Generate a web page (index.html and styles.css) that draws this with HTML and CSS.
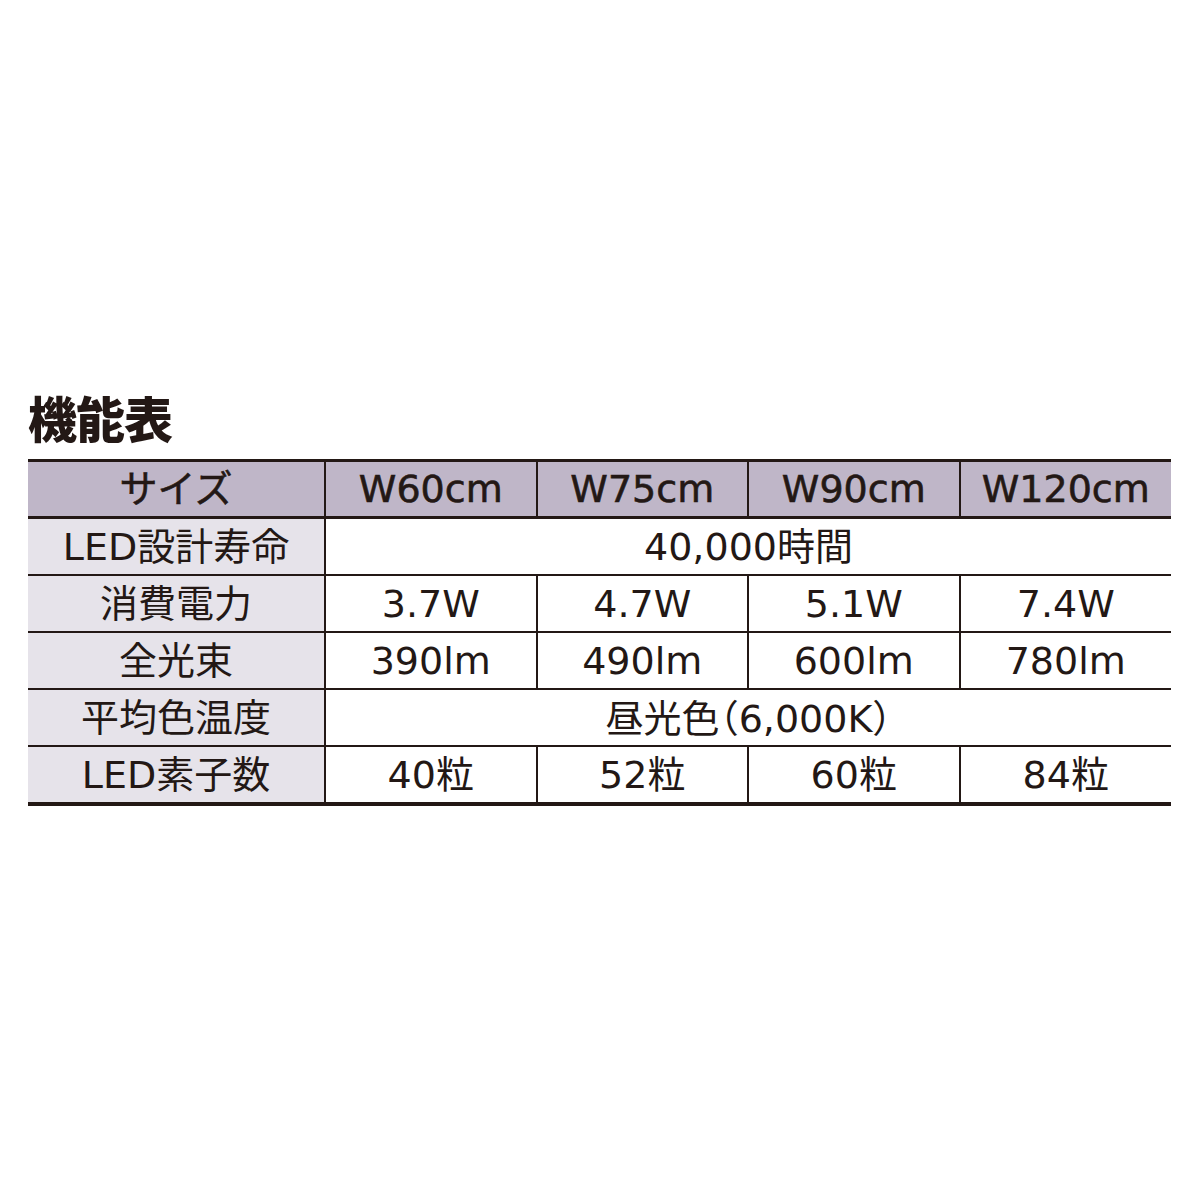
FILE: index.html
```html
<!DOCTYPE html>
<html lang="ja">
<head>
<meta charset="utf-8">
<link rel="stylesheet" href="styles.css">
</head>
<body>
<div class="page">
  <h1 class="title">機能表</h1>
  <table class="spec">
    <colgroup>
      <col class="c-label">
      <col class="c-val">
      <col class="c-val">
      <col class="c-val">
      <col class="c-val">
    </colgroup>
    <thead>
      <tr>
        <th>サイズ</th>
        <th>W60cm</th>
        <th>W75cm</th>
        <th>W90cm</th>
        <th>W120cm</th>
      </tr>
    </thead>
    <tbody>
      <tr>
        <th>LED設計寿命</th>
        <td colspan="4">40,000時間</td>
      </tr>
      <tr>
        <th>消費電力</th>
        <td>3.7W</td>
        <td>4.7W</td>
        <td>5.1W</td>
        <td>7.4W</td>
      </tr>
      <tr>
        <th>全光束</th>
        <td>390lm</td>
        <td>490lm</td>
        <td>600lm</td>
        <td>780lm</td>
      </tr>
      <tr>
        <th>平均色温度</th>
        <td colspan="4">昼光色<span class="paren">（</span>6,000K<span class="paren">）</span></td>
      </tr>
      <tr>
        <th>LED素子数</th>
        <td>40粒</td>
        <td>52粒</td>
        <td>60粒</td>
        <td>84粒</td>
      </tr>
    </tbody>
  </table>
</div>
</body>
</html>
```

FILE: styles.css
```css
html, body {
  margin: 0;
  padding: 0;
  background: #ffffff;
}

body {
  width: 1200px;
  height: 1200px;
  color: #231815;
  font-family: "DejaVu Sans", "Noto Sans CJK JP", sans-serif;
}

.page {
  padding: 391px 29px 0 28px;
}

.title {
  margin: 0 0 16px 0;
  font-family: "Noto Sans CJK JP", sans-serif;
  font-weight: 900;
  font-size: 49px;
  line-height: 52px;
  letter-spacing: -1px;
  color: #231815;
}

.spec {
  width: 1143px;
  border-collapse: collapse;
  table-layout: fixed;
  font-size: 38px;
  line-height: 44px;
}

.c-label {
  width: 297px;
}

.c-val {
  width: 211.5px;
}

.spec th,
.spec td {
  padding: 0;
  text-align: center;
  font-weight: 400;
  border: 2px solid #231815;
  white-space: nowrap;
}

.spec tr > :first-child {
  border-left: none;
}

.spec tr > :last-child {
  border-right: none;
}

.spec thead th {
  background: #bfb6c8;
  height: 54px;
  border-top: 3px solid #231815;
  border-bottom: 3px solid #231815;
  -webkit-text-stroke: 0.6px #231815;
}

.spec tbody th {
  background: #e6e3ea;
}

.spec tbody th,
.spec tbody td {
  height: 55px;
}

.spec tbody tr:last-child th,
.spec tbody tr:last-child td {
  border-bottom: 4px solid #231815;
}

.paren {
  font-family: "Noto Sans CJK JP", sans-serif;
  font-feature-settings: "halt" 1;
}
```
